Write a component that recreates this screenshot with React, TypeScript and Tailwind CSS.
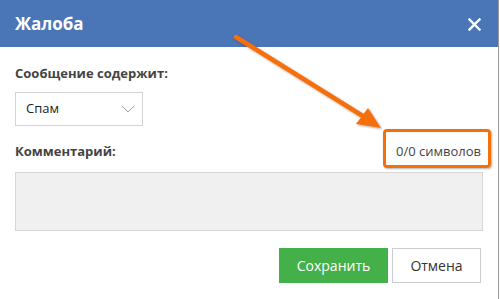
import React from 'react';

const font = { fontFamily: '"Open Sans", "Noto Sans", sans-serif' };

export default function App() {
    return (
        <div className="relative w-[500px] h-[299px] bg-white overflow-hidden" style={font}>
            <div className="flex flex-col w-[499px] h-full border-r border-[#9a9a9a]">
                {/* Header */}
                <div className="flex items-center justify-between h-[47px] pl-[15px] pr-[17px] bg-[#4a76b7]">
                    <h2 className="text-[17px] font-bold text-white leading-none">Жалоба</h2>
                    <svg width="13" height="13" viewBox="0 0 13 13" className="mt-[1px]">
                        <path d="M1.5 1.5 L11.5 11.5 M11.5 1.5 L1.5 11.5" stroke="white" strokeWidth="2.4" strokeLinecap="square" />
                    </svg>
                </div>

                {/* Body */}
                <div className="flex flex-col pl-[15px] pr-[16px]">
                    <p className="mt-[17px] text-[13px] leading-[18px] font-bold text-[#444]">Сообщение содержит:</p>

                    <div className="mt-[10px] flex items-center justify-between w-[128px] h-[34px] pl-[10px] pr-[7px] border border-[#d4d4d4]">
                        <span className="text-[13px] text-[#222]">Спам</span>
                        <svg width="14" height="8" viewBox="0 0 14 8">
                            <path d="M1 1 L7 7 L13 1" fill="none" stroke="#a0a0a0" strokeWidth="1" />
                        </svg>
                    </div>

                    <div className="mt-[16px] flex items-end justify-between">
                        <p className="text-[13px] leading-[18px] font-bold text-[#444]">Комментарий:</p>
                        <span className="relative text-[13px] leading-[18px] text-[#444] mr-[1px]">
                            0/0 символов
                            <span className="absolute -left-[13px] -right-[10px] -top-[13px] -bottom-[8px] rounded-[4px] border-[3px] border-[#f5700a] shadow-[1px_1px_2px_rgba(0,0,0,0.3)]" />
                        </span>
                    </div>

                    <div className="mt-[12px] h-[59px] w-[468px] bg-[#f0f0f0] border border-[#d6d6d6]" />

                    <div className="mt-[17px] flex justify-end gap-[4px] pr-[1px]">
                        <button className="w-[109px] h-[35px] bg-[#44b049] text-white text-[14px]">Сохранить</button>
                        <button className="w-[89px] h-[35px] bg-white border border-[#cccccc] text-[#333] text-[14px]">Отмена</button>
                    </div>
                </div>
            </div>

            {/* Annotation arrow */}
            <svg className="absolute left-0 top-0 pointer-events-none" width="500" height="299" viewBox="0 0 500 299">
                <defs>
                    <filter id="sh" x="-10%" y="-10%" width="130%" height="130%">
                        <feDropShadow dx="1" dy="1" stdDeviation="0.8" floodColor="#000" floodOpacity="0.35" />
                    </filter>
                </defs>
                <g filter="url(#sh)">
                    <line x1="236" y1="37" x2="366" y2="118" stroke="#f5700a" strokeWidth="4.5" strokeLinecap="round" />
                    <polygon points="381,128 356,124 368,108" fill="#f5700a" />
                </g>
            </svg>
        </div>
    );
}
